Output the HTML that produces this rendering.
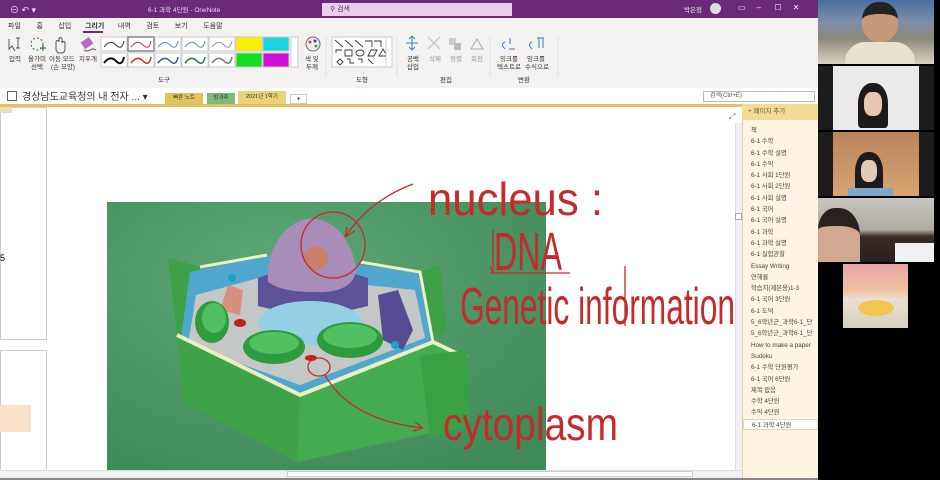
<!DOCTYPE html>
<html><head><meta charset="utf-8">
<style>
*{margin:0;padding:0;box-sizing:border-box}
body{width:940px;height:480px;overflow:hidden;background:#000;font-family:"Liberation Sans","Noto Sans CJK KR",sans-serif;position:relative}
.a{position:absolute}
.t{font-size:7px;color:#333;white-space:nowrap}
.pl div{height:11.3px;font-size:6.3px;color:#444;padding-left:8px;line-height:11.3px;white-space:nowrap}
</style></head><body>
<div class="a" style="left:0;top:0;width:818px;height:480px;background:#fff"></div>
<div class="a" style="left:0;top:0;width:818px;height:18px;background:#6b2a78"></div>
<div class="a t" style="left:10px;top:3px;color:#e8d8ee;font-size:9px">⊖ ↶ ▾</div>
<div class="a t" style="left:148px;top:4px;color:#e8d8ee;font-size:6.5px">6-1 과학 4단원 - OneNote</div>
<div class="a" style="left:322px;top:3px;width:190px;height:13px;background:#e9cfe9"></div>
<div class="a t" style="left:330px;top:4px;font-size:7px;color:#444">⚲ 검색</div>
<div class="a t" style="left:684px;top:4px;color:#eee;font-size:6.5px">박은정</div>
<div class="a" style="left:710px;top:3px;width:11px;height:11px;border-radius:50%;background:#ddd"></div>
<div class="a t" style="left:738px;top:3px;color:#eee;font-size:8px">▭ &nbsp;&nbsp;&nbsp; – &nbsp;&nbsp;&nbsp;&nbsp; ☐ &nbsp;&nbsp;&nbsp; ✕</div>
<div class="a" style="left:0;top:18px;width:818px;height:70px;background:#f3f2f1"></div>
<div class="a t" style="left:8px;top:21px;font-size:7px;word-spacing:0">파일&nbsp;&nbsp;&nbsp;&nbsp;&nbsp;&nbsp;&nbsp;&nbsp;홈&nbsp;&nbsp;&nbsp;&nbsp;&nbsp;&nbsp;&nbsp;&nbsp;삽입&nbsp;&nbsp;&nbsp;&nbsp;&nbsp;&nbsp;&nbsp;<b>그리기</b>&nbsp;&nbsp;&nbsp;&nbsp;&nbsp;&nbsp;&nbsp;내역&nbsp;&nbsp;&nbsp;&nbsp;&nbsp;&nbsp;&nbsp;&nbsp;검토&nbsp;&nbsp;&nbsp;&nbsp;&nbsp;&nbsp;&nbsp;&nbsp;보기&nbsp;&nbsp;&nbsp;&nbsp;&nbsp;&nbsp;&nbsp;&nbsp;도움말</div>
<div class="a" style="left:83px;top:31px;width:20px;height:2px;background:#6b2a78"></div>
<svg class="a" style="left:0;top:34px" width="818" height="54">
<g stroke="#555" fill="none" stroke-width="1">
<path d="M9 5 l0 10 l3 -3 l3 5 M16 4 h4 M18 4 v10 M16 14 h4"/>
<circle cx="37" cy="10" r="6" stroke-dasharray="2 2"/>
<path d="M56 16 v-8 a1.5 1.5 0 0 1 3 0 v-3 a1.5 1.5 0 0 1 3 0 v4 a1.5 1.5 0 0 1 3 0 v6 q0 4 -4 4 h-3 z"/>
</g>
<path d="M40 14 h6 M43 11 v6" stroke="#2a8a3a" stroke-width="1.3"/>
<rect x="82" y="5" width="10" height="8" fill="#b46bc8" transform="rotate(-35 87 9)"/>
<path d="M84 16 q3 2 6 0 q3 -2 6 0" stroke="#555" fill="none"/>
<g font-size="6.5" fill="#333" font-family="Liberation Sans,Noto Sans CJK KR,sans-serif">
<text x="9" y="27">입력</text><text x="28" y="27">올가미</text><text x="31" y="35">선택</text>
<text x="49" y="27">이동 모드</text><text x="51" y="35">(손 모양)</text><text x="79" y="27">지우개</text>
<text x="305" y="27">색 및</text><text x="306" y="35">두께</text>
<text x="407" y="27">공백</text><text x="407" y="35">삽입</text>
<text x="429" y="27" fill="#999">삭제</text><text x="450" y="27" fill="#999">정렬</text><text x="471" y="27" fill="#999">회전</text>
<text x="500" y="27">잉크를</text><text x="497" y="35">텍스트로</text><text x="527" y="27">잉크를</text><text x="525" y="35">수식으로</text>
<text x="158" y="48">도구</text><text x="356" y="48">도형</text><text x="440" y="48">편집</text><text x="518" y="48">변환</text>
</g>
<g>
<rect x="101" y="3" width="26" height="14" fill="#fff" stroke="#ccc"/><path d="M104 13 q6 -8 12 -2 t8 -4" stroke="#333" fill="none"/>
<rect x="128" y="3" width="26" height="14" fill="#fff" stroke="#888" stroke-width="1.5"/><path d="M131 13 q6 -8 12 -2 t8 -4" stroke="#c33" fill="none"/>
<rect x="155" y="3" width="26" height="14" fill="#fff" stroke="#ccc"/><path d="M158 13 q6 -8 12 -2 t8 -4" stroke="#68c" fill="none"/>
<rect x="182" y="3" width="26" height="14" fill="#fff" stroke="#ccc"/><path d="M185 13 q6 -8 12 -2 t8 -4" stroke="#4a8" fill="none"/>
<rect x="209" y="3" width="26" height="14" fill="#fff" stroke="#ccc"/><path d="M212 13 q6 -8 12 -2 t8 -4" stroke="#999" fill="none"/>
<rect x="236" y="3" width="26" height="14" fill="#f5f100" stroke="#ccc"/>
<rect x="263" y="3" width="26" height="14" fill="#18d4e0" stroke="#ccc"/>
<rect x="101" y="19" width="26" height="14" fill="#fff" stroke="#ccc"/><path d="M104 29 q6 -8 12 -2 t8 -4" stroke="#111" stroke-width="2" fill="none"/>
<rect x="128" y="19" width="26" height="14" fill="#fff" stroke="#ccc"/><path d="M131 29 q6 -8 12 -2 t8 -4" stroke="#d22" stroke-width="1.5" fill="none"/>
<rect x="155" y="19" width="26" height="14" fill="#fff" stroke="#ccc"/><path d="M158 29 q6 -8 12 -2 t8 -4" stroke="#35a" stroke-width="1.5" fill="none"/>
<rect x="182" y="19" width="26" height="14" fill="#fff" stroke="#ccc"/><path d="M185 29 q6 -8 12 -2 t8 -4" stroke="#1a7a3a" stroke-width="1.5" fill="none"/>
<rect x="209" y="19" width="26" height="14" fill="#fff" stroke="#ccc"/><path d="M212 29 q6 -8 12 -2 t8 -4" stroke="#777" stroke-width="1.5" fill="none"/>
<rect x="236" y="19" width="26" height="14" fill="#10e020" stroke="#ccc"/>
<rect x="263" y="19" width="26" height="14" fill="#d010d8" stroke="#ccc"/>
<rect x="291" y="3" width="7" height="30" fill="#fff" stroke="#ccc"/>
<circle cx="313" cy="10" r="7" fill="#eee" stroke="#666"/><circle cx="310" cy="8" r="1.5" fill="#e33"/><circle cx="315" cy="7" r="1.5" fill="#33e"/><circle cx="316" cy="12" r="1.5" fill="#3a3"/>
<rect x="332" y="3" width="56" height="30" fill="#fff" stroke="#ccc"/>
<path d="M335 6 l8 7 M345 6 l8 7 M355 6 l8 7 M365 7 h7 v6 M374 7 h7 v6 M336 19 v-3 h6 M345 16 h7 v6 h-7z M356 19 a4 3 0 1 0 8 0 a4 3 0 1 0 -8 0 M368 22 l3 -6 h6 l-3 6z M379 22 l4 -7 l4 7z M337 28 l3 -3 l3 3 l-3 3z M347 25 h3 v4 h4 M358 25 h4 v4 M368 25 l5 5" stroke="#333" fill="none" stroke-width="0.9"/>
<rect x="386" y="3" width="6" height="30" fill="#fff" stroke="#ccc"/>
<path d="M412 2 v14 M406 9 h12 M409 5 l3 -3 l3 3 M409 13 l3 3 l3 -3" stroke="#3a7ec8" fill="none"/>
<path d="M428 3 l12 12 M440 3 l-12 12" stroke="#bbb"/>
<rect x="449" y="4" width="7" height="7" fill="#ccc"/><rect x="454" y="9" width="7" height="7" fill="#bbb"/>
<path d="M471 15 l6 -10 l6 10z" stroke="#aaa" fill="none"/>
<path d="M505 8 q-5 2 0 7 M510 4 v6 M509 15 h6" stroke="#3a7ec8" fill="none"/>
<path d="M532 8 q-5 2 0 7 M537 4 h7 M539 4 v10 M543 4 v10" stroke="#3a7ec8" fill="none"/>
</g>
<g stroke="#ddd"><path d="M326 3 v40 M397 3 v40 M490 3 v40 M558 3 v40"/></g>
</svg>
<div class="a" style="left:0;top:88px;width:818px;height:16px;background:#fff"></div>
<div class="a" style="left:7px;top:91px;width:10px;height:10px;border:1px solid #666"></div>
<div class="a t" style="left:22px;top:88px;font-size:10px;color:#333">경상남도교육청의 내 전자 ... ▾</div>
<div class="a" style="left:165px;top:93px;width:38px;height:11px;background:#e3c45c;font-size:5.5px;text-align:center;line-height:11px;color:#333">빠른 노트</div>
<div class="a" style="left:207px;top:93px;width:28px;height:11px;background:#7dbb7a;font-size:5.5px;text-align:center;line-height:11px;color:#333">방과후</div>
<div class="a" style="left:238px;top:91px;width:48px;height:13px;background:#ecd27a;font-size:5.5px;text-align:center;line-height:13px;color:#333">2021년 1학기</div>
<div class="a" style="left:290px;top:94px;width:17px;height:10px;border:1px solid #ccc;font-size:7px;text-align:center;line-height:9px">+</div>
<div class="a" style="left:703px;top:91px;width:112px;height:11px;border:1px solid #bbb;font-size:6px;color:#555;padding-left:6px;line-height:9px">검색(Ctrl+E)</div>
<div class="a" style="left:0;top:104px;width:742px;height:3px;background:#e3c45c"></div>
<div class="a" style="left:0;top:107px;width:47px;height:233px;border:1px solid #ccc;background:#fff"></div>
<div class="a" style="left:0;top:350px;width:47px;height:122px;border:1px solid #ccc;background:#fff"></div>
<div class="a" style="left:0;top:405px;width:31px;height:27px;background:#f9e3c8"></div>
<div class="a" style="left:0;top:253px;font-size:9px;color:#000">5</div>
<div class="a" style="left:0;top:107px;width:12px;height:6px;background:#e9dcc0"></div>
<div class="a" style="left:735px;top:123px;width:7px;height:347px;background:#f0f0f0;border-left:1px solid #ddd"></div>
<div class="a" style="left:735px;top:213px;width:7px;height:7px;background:#fff;border:1px solid #aaa"></div>
<div class="a" style="left:729px;top:112px;font-size:8px;color:#666">⤢</div>
<div class="a" style="left:0;top:470px;width:742px;height:8px;background:#f0f0f0;border-top:1px solid #ddd"></div>
<div class="a" style="left:287px;top:471px;width:406px;height:6px;background:#fff;border:1px solid #ccc"></div>
<div class="a" style="left:0;top:478px;width:818px;height:2px;background:#888"></div>
<div class="a" style="left:742px;top:104px;width:76px;height:374px;background:#fdf5e1;border-left:1px solid #e0d2a8"></div>
<div class="a" style="left:742px;top:104px;width:76px;height:16px;background:#f2dc94;font-size:6.5px;color:#555;padding-left:6px;line-height:16px">+ 페이지 추가</div>
<div class="a pl" style="left:743px;top:125px;width:75px">
<div>책</div><div>6-1 수학</div><div>6-1 수학 설명</div><div>6-1 수익</div><div>6-1 사회 1단원</div><div>6-1 사회 2단원</div><div>6-1 사회 설명</div><div>6-1 국어</div><div>6-1 국어 설명</div><div>6-1 과학</div><div>6-1 과학 설명</div><div>6-1 실험관찰</div><div>Essay Writing</div><div>연해룡</div><div>학습지(제본용)1-3</div><div>6-1 국어 3단원</div><div>6-1 도덕</div><div>5_6학년군_과학6-1_단</div><div>5_6학년군_과학6-1_단</div><div>How to make a paper</div><div>Sudoku</div><div>6-1 수학 단원평가</div><div>6-1 국어 6단원</div><div>제목 없음</div><div>수학 4단원</div><div>수익 4단원</div><div style="background:#fff;border:1px solid #e0d8c0">6-1 과학 4단원</div>
</div>
<svg class="a" style="left:0;top:107px" width="742" height="363">
<defs><radialGradient id="bg" cx="40%" cy="30%" r="80%"><stop offset="0" stop-color="#5fa877"/><stop offset="1" stop-color="#3f8a57"/></radialGradient></defs>
<g transform="translate(0,-107)">
<rect x="107" y="202" width="439" height="268" fill="url(#bg)"/>
<polygon points="168,258 200,267 200,340 177,335" fill="#3ea048"/>
<polygon points="420,272 440,265 447,330 433,342" fill="#3ea048"/>
<polygon points="190,272 267,255 420,272 433,342 300,395 180,345" fill="#4fa7d0"/>
<polygon points="196,295 270,275 415,290 425,338 300,385 188,345" fill="#c3c8c6"/>
<polygon points="177,335 300,395 297,462 183,402" fill="#3da24a"/>
<polygon points="300,395 433,342 467,358 467,425 297,462" fill="#44ac50"/>
<path d="M177,335 L300,395 L433,342 L467,358" stroke="#eaf0c0" stroke-width="4" fill="none"/>
<path d="M200,267 L267,255 M360,262 L420,272 L433,342" stroke="#eaf0c0" stroke-width="3" fill="none"/>
<polygon points="420,356 467,350 470,425 430,438" fill="#39a044"/>
<path d="M228,285 l15,5 l-3,25 l-20,-5z" fill="#d68f80"/>
<path d="M258,278 q50,-20 110,0 v28 q-55,15 -110,0z" fill="#5b5298"/>
<path d="M268,282 a44,58 0 0 1 88,-10 q-5,22 -44,20 q-30,0 -44,-10z" fill="#a88cba"/>
<circle cx="316" cy="258" r="12" fill="#c9806a"/>
<ellipse cx="310" cy="323" rx="52" ry="22" fill="#93d0e6"/>
<path d="M378,295 l20,-5 l15,40 l-10,20 l-20,-10z" fill="#554c92"/>
<ellipse cx="212" cy="322" rx="17" ry="21" fill="#2f9a3e"/><ellipse cx="214" cy="318" rx="12" ry="15" fill="#50c060"/>
<ellipse cx="274" cy="347" rx="31" ry="17" fill="#2f9a3e"/><ellipse cx="274" cy="343" rx="25" ry="11" fill="#50c060"/>
<ellipse cx="350" cy="340" rx="33" ry="18" fill="#2f9a3e"/><ellipse cx="350" cy="336" rx="27" ry="12" fill="#50c060"/>
<ellipse cx="240" cy="323" rx="6" ry="4" fill="#c02020"/><ellipse cx="311" cy="358" rx="6" ry="3" fill="#c02020"/>
<circle cx="232" cy="278" r="4" fill="#1aa0c8"/><circle cx="395" cy="345" r="4" fill="#1aa0c8"/>
<g stroke="#c62a2a" fill="none" stroke-width="1.3">
<path d="M413,184 Q370,200 345,237 M345,237 l2,-10 M345,237 l10,-6"/>
<ellipse cx="333" cy="245" rx="32" ry="33"/>
<ellipse cx="319" cy="367" rx="11" ry="9"/>
<path d="M325,375 Q350,420 423,428 M423,428 l-8,-6 M423,428 l-10,3"/>
<path d="M490,273 H570 M493,230 v43 M493,273 l-3,-7"/>
<path d="M625,266 v60"/>
</g>
<g fill="#c62a2a" font-family="Liberation Sans,sans-serif">
<text transform="scale(1,1.8)" x="428" y="119.4" font-size="26" textLength="175" lengthAdjust="spacingAndGlyphs">nucleus :</text>
<text transform="scale(1,1.8)" x="494" y="150" font-size="30" textLength="68" lengthAdjust="spacingAndGlyphs">DNA</text>
<text transform="scale(1,2)" x="460" y="162" font-size="26" textLength="275" lengthAdjust="spacingAndGlyphs">Genetic information</text>
<text transform="scale(1,1.8)" x="443" y="244.5" font-size="26" textLength="175" lengthAdjust="spacingAndGlyphs">cytoplasm</text>
</g>
</g>
</svg>
<div class="a" style="left:818px;top:0;width:116px;height:64px;background:linear-gradient(180deg,#4a6fa0 0,#7d8ea8 35%,#8d8778 60%,#d8d2c0 100%)"></div>
<div class="a" style="left:862px;top:2px;width:36px;height:40px;border-radius:45%;background:#c59a7a;border-top:12px solid #222"></div>
<div class="a" style="left:845px;top:42px;width:70px;height:22px;border-radius:20px 20px 0 0;background:#e8e2cf"></div>
<div class="a" style="left:818px;top:66px;width:116px;height:64px;background:#1c1c1c"></div>
<div class="a" style="left:833px;top:66px;width:86px;height:64px;background:#eaeaea"></div>
<div class="a" style="left:858px;top:83px;width:30px;height:45px;border-radius:45% 45% 10% 10%;background:#1e1a1a"></div>
<div class="a" style="left:864px;top:92px;width:18px;height:24px;border-radius:40%;background:#e7c7b0"></div>
<div class="a" style="left:818px;top:132px;width:116px;height:64px;background:#1c1c1c"></div>
<div class="a" style="left:833px;top:132px;width:86px;height:64px;background:linear-gradient(180deg,#b8845a,#d9a473)"></div>
<div class="a" style="left:855px;top:152px;width:28px;height:44px;border-radius:45% 45% 10% 10%;background:#1e1a1a"></div>
<div class="a" style="left:861px;top:160px;width:16px;height:22px;border-radius:40%;background:#e2c9b8"></div>
<div class="a" style="left:848px;top:188px;width:45px;height:8px;background:#7fa8c8"></div>
<div class="a" style="left:818px;top:198px;width:116px;height:64px;background:linear-gradient(180deg,#c8c6c2 0,#b0aaa0 50%,#3a2c26 60%,#2a201c 100%)"></div>
<div class="a" style="left:818px;top:208px;width:42px;height:54px;border-radius:40% 50% 0 0;background:#d2a890;border-top:18px solid #2a2220"></div>
<div class="a" style="left:895px;top:243px;width:39px;height:19px;background:#f0f0f0"></div>
<div class="a" style="left:843px;top:264px;width:65px;height:64px;background:linear-gradient(180deg,#e8a4a8 0,#efc0a0 40%,#e8e0d0 55%,#d6cec0 100%)"></div>
<div class="a" style="left:858px;top:300px;width:36px;height:16px;border-radius:50%;background:#f2c650"></div>
</body></html>
